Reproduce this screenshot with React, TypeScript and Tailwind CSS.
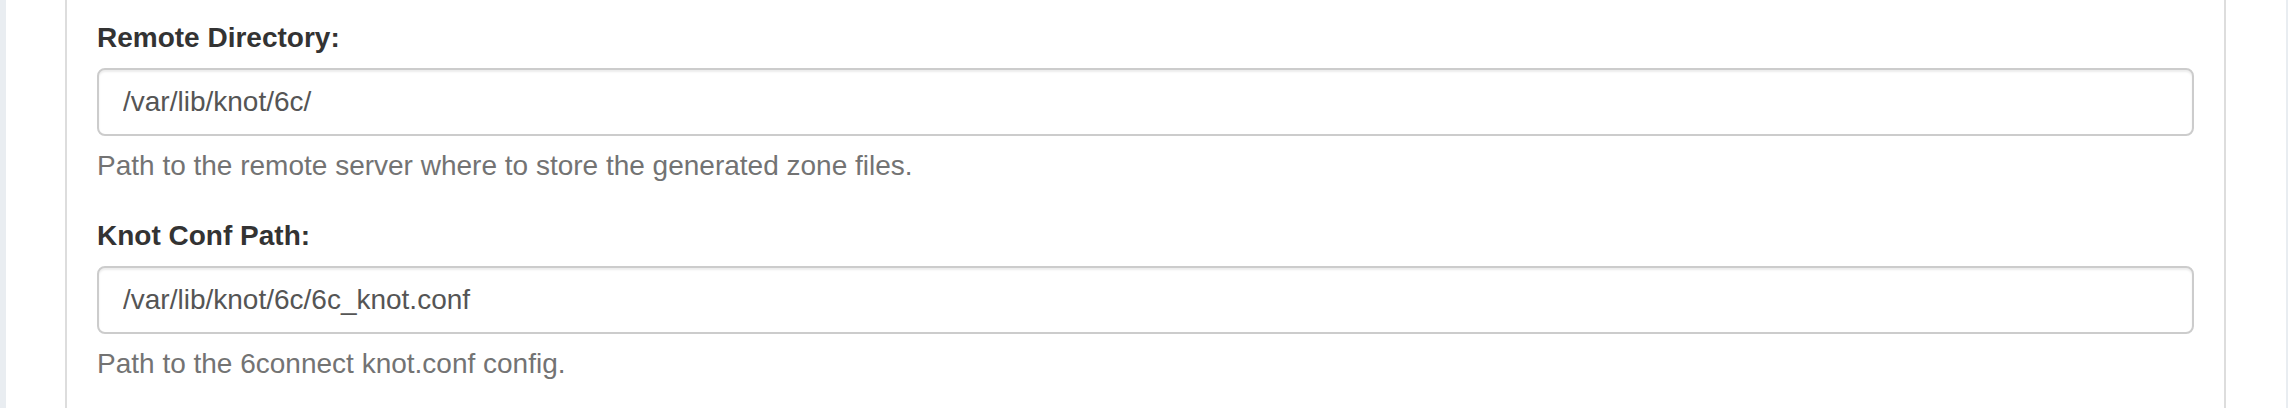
import React from "react";

function Field({ label, value, help }: { label: string; value: string; help: string }) {
  return (
    <div className="mb-[30px]">
      <label className="block text-[28px] leading-[40px] font-bold text-[#333] mb-[10px]">{label}</label>
      <input
        readOnly
        value={value}
        className="block w-full h-[68px] px-[24px] text-[28px] text-[#555] bg-white border-2 border-[#ccc] rounded-[8px] shadow-[inset_0_2px_2px_rgba(0,0,0,0.075)] outline-none"
        style={{ fontFamily: '"Liberation Sans", Arial, sans-serif' }}
      />
      <p className="mt-[10px] text-[28px] leading-[40px] text-[#737373]">{help}</p>
    </div>
  );
}

export default function App() {
  return (
    <div
      className="w-[2288px] h-[408px] overflow-hidden bg-[#e9edf1] pl-[6px] pr-[2px] flex"
      style={{ fontFamily: '"Liberation Sans", Arial, sans-serif' }}
    >
      <div className="flex-1 bg-white pl-[59px] pr-[60px]">
        <div className="h-full border-x-2 border-[#dddddd] px-[30px] pt-[18px]">
          <Field
            label="Remote Directory:"
            value="/var/lib/knot/6c/"
            help="Path to the remote server where to store the generated zone files."
          />
          <Field
            label="Knot Conf Path:"
            value="/var/lib/knot/6c/6c_knot.conf"
            help="Path to the 6connect knot.conf config."
          />
        </div>
      </div>
    </div>
  );
}
